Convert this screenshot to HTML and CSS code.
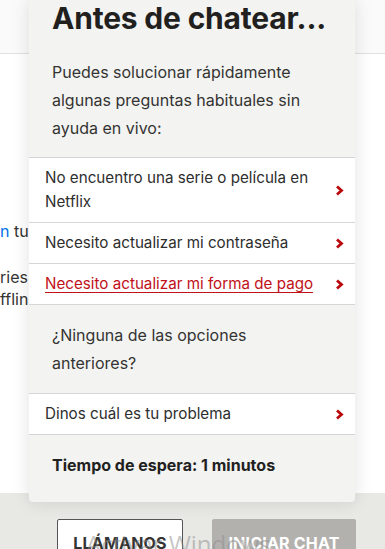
FILE: index.html
```html
<!DOCTYPE html>
<html lang="es">
<head>
<meta charset="utf-8">
<link rel="stylesheet" href="styles.css">
</head>
<body>
<div class="page">
  <header class="topbar"></header>
  <main class="content">
    <p class="bg-line first"><span class="link">n</span> tu TV</p>
    <p class="bg-line gap">ries</p>
    <p class="bg-line">ffline</p>
  </main>
  <footer class="footer">
    <button class="btn btn-call">LLÁMANOS</button>
    <button class="btn btn-chat">INICIAR CHAT</button>
  </footer>

  <section class="modal">
    <div class="modal-head">
      <h1 class="title">Antes de chatear...</h1>
      <p class="intro">Puedes solucionar rápidamente algunas preguntas habituales sin ayuda en vivo:</p>
    </div>
    <ul class="options">
      <li class="option"><span class="opt-text">No encuentro una serie o película en Netflix</span><svg class="chev" viewBox="0 0 9 11"><path d="M2 1.5 L6.5 5.5 L2 9.5"/></svg></li>
      <li class="option"><span class="opt-text">Necesito actualizar mi contraseña</span><svg class="chev" viewBox="0 0 9 11"><path d="M2 1.5 L6.5 5.5 L2 9.5"/></svg></li>
      <li class="option"><span class="opt-text active">Necesito actualizar mi forma de pago</span><svg class="chev" viewBox="0 0 9 11"><path d="M2 1.5 L6.5 5.5 L2 9.5"/></svg></li>
    </ul>
    <div class="none">¿Ninguna de las opciones anteriores?</div>
    <ul class="options">
      <li class="option"><span class="opt-text">Dinos cuál es tu problema</span><svg class="chev" viewBox="0 0 9 11"><path d="M2 1.5 L6.5 5.5 L2 9.5"/></svg></li>
    </ul>
    <div class="wait">Tiempo de espera: 1 minutos</div>
  </section>

  <div class="watermark">Activar Windows</div>
</div>
</body>
</html>
```
FILE: styles.css
```css
* { box-sizing: border-box; }
html, body { margin: 0; padding: 0; }
body {
  font-family: Inter, "Noto Sans", sans-serif;
  color: #333;
  background: #fff;
  overflow: hidden;
}
.page {
  position: relative;
  width: 385px;
  height: 549px;
  display: flex;
  flex-direction: column;
  overflow: hidden;
}
.topbar {
  height: 54px;
  flex: none;
  background: #fafafa;
  border-bottom: 1px solid #e2e2e2;
}
.content {
  flex: 1;
  padding-top: 166px;
  font-size: 16px;
  color: #333;
}
.bg-line {
  margin: 0;
  line-height: 22px;
  white-space: nowrap;
}
.bg-line.gap { margin-top: 24px; }
.link { color: #0071eb; }
.footer {
  flex: none;
  height: 56px;
  background: #e8e8e5;
  display: flex;
  gap: 29px;
  padding: 26px 0 0 57px;
}
.btn {
  height: 48px;
  flex: none;
  font-family: inherit;
  font-size: 16px;
  font-weight: 700;
  letter-spacing: 0.2px;
  padding: 0;
  display: flex;
  justify-content: center;
  align-items: center;
  cursor: pointer;
}
.btn-call {
  width: 126px;
  background: #fff;
  color: #333;
  border: 1px solid #555;
  border-radius: 2px;
}
.btn-chat {
  width: 144px;
  background: #b3b1ae;
  color: #fff;
  border: none;
  border-radius: 2px;
}
.modal {
  position: absolute;
  left: 29px;
  top: 0;
  width: 326px;
  height: 502px;
  background: #f3f3f1;
  border-radius: 0 0 4px 4px;
  box-shadow: 0 0 18px rgba(0,0,0,0.12);
  display: flex;
  flex-direction: column;
}
.modal-head {
  padding: 0 23px 15px;
}
.title {
  margin: 0;
  font-size: 30px;
  line-height: 36px;
  font-weight: 700;
  color: #221f1f;
  letter-spacing: -0.2px;
}
.intro {
  margin: 22px 0 0;
  font-size: 16px;
  line-height: 28px;
  color: #333;
}
.options {
  list-style: none;
  margin: 0;
  padding: 0;
  background: #fff;
}
.option {
  display: flex;
  align-items: center;
  justify-content: space-between;
  gap: 8px;
  padding: 8px 11px 8px 16px;
  border-top: 1px solid #d6d6d6;
  font-size: 15.2px;
  line-height: 24px;
  color: #2e2e2e;
}
.opt-text.active {
  color: #c11119;
  text-decoration: underline;
  text-underline-offset: 3px;
}
.chev {
  width: 9px;
  height: 11px;
  flex: none;
}
.chev path {
  fill: none;
  stroke: #b9090b;
  stroke-width: 2.8;
}
.none {
  border-top: 1px solid #d6d6d6;
  padding: 16px 23px;
  font-size: 16px;
  line-height: 28px;
  color: #333;
}
.wait {
  border-top: 1px solid #d6d6d6;
  padding: 16px 23px;
  font-size: 16px;
  line-height: 28px;
  font-weight: 700;
  color: #221f1f;
}
.watermark {
  position: absolute;
  left: 86px;
  top: 527px;
  font-family: "Open Sans", sans-serif;
  font-size: 24px;
  color: rgba(140,140,140,0.5);
  white-space: nowrap;
  pointer-events: none;
}
```
